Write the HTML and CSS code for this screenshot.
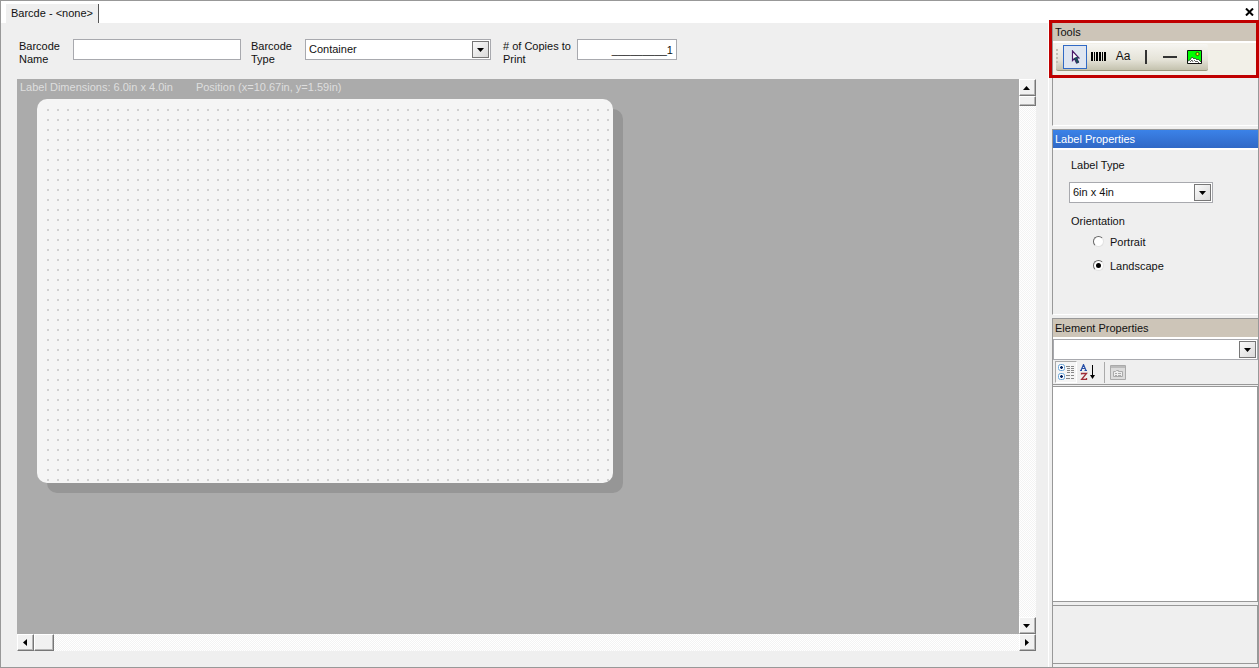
FILE: index.html
```html
<!DOCTYPE html>
<html lang="en">
<head>
<meta charset="utf-8">
<title>Barcode designer</title>
<link rel="stylesheet" href="styles.css">
</head>
<body>
<div class="window">
  <header class="tabs">
    <button class="tab" type="button">Barcde - &lt;none&gt;</button>
    <button class="close" type="button" aria-label="Close"><svg width="9" height="8" viewBox="0 0 9 8"><path d="M1 .5 8 7.5M8 .5 1 7.5" stroke="#000" stroke-width="2"/></svg></button>
  </header>
  <div class="workspace">
    <main class="main">
      <form class="fields">
        <label class="caption" for="name">Barcode Name</label>
        <input class="box name" id="name" type="text">
        <label class="caption" for="type">Barcode Type</label>
        <span class="combo type">
          <select class="box" id="type"><option>Container</option></select>
          <span class="drop"><svg width="7" height="4"><path d="M0 0h7L3.500 4z"/></svg></span>
        </span>
        <label class="caption copies-label" for="copies"># of Copies to Print</label>
        <input class="box copies" id="copies" type="text" value="_________1">
      </form>
      <div class="designer">
        <section class="canvas">
          <div class="status"><span>Label Dimensions: 6.0in x 4.0in</span><span>Position (x=10.67in, y=1.59in)</span></div>
          <div class="sheet"></div>
        </section>
        <div class="scroll vertical">
          <button type="button" class="arrow" aria-label="Scroll up"><svg width="7" height="4"><path d="M0 4h7L3.500 0z"/></svg></button>
          <div class="thumb"></div>
          <button type="button" class="arrow last" aria-label="Scroll down"><svg width="7" height="4"><path d="M0 0h7L3.500 4z"/></svg></button>
        </div>
        <div class="scroll horizontal">
          <button type="button" class="arrow" aria-label="Scroll left"><svg width="4" height="7"><path d="M4 0v7L0 3.500z"/></svg></button>
          <div class="thumb"></div>
        </div>
        <button type="button" class="arrow" aria-label="Scroll right"><svg width="4" height="7"><path d="M0 0v7l4-3.500z"/></svg></button>
      </div>
    </main>
    <aside class="side">
      <section class="tools">
        <h2 class="title">Tools</h2>
        <div class="strip">
          <div class="toolbar">
            <svg class="grip" width="2" height="16"><path d="M1 0v16" stroke="#c3c0b4" stroke-width="2" stroke-dasharray="2 2"/></svg>
            <button type="button" class="tool selected" aria-label="Select"><svg width="9" height="14" viewBox="0 0 9 14"><path d="M1.500 1v9.500l2-2 2 4.500 2-1-2-4H8z" fill="#fff" stroke="#4a1768" stroke-width="1.200"/><path d="M2.500 9 5 7l3 .5-2 1 2 4-2 1-2-4z" fill="#174c55"/></svg></button>
            <button type="button" class="tool" aria-label="Barcode"><svg width="15" height="9"><path d="M0 0h2v9H0zM3 0h1v9H3zM5 0h2v9H5zM8 0h2v9H8zM11 0h1v9h-1zM13 0h2v9h-2z"/></svg></button>
            <button type="button" class="tool text">Aa</button>
            <button type="button" class="tool" aria-label="Vertical line"><svg width="2" height="14"><path d="M0 0h2v14H0z" fill="#333"/></svg></button>
            <button type="button" class="tool" aria-label="Horizontal line"><svg width="14" height="2"><path d="M0 0h14v2H0z" fill="#333"/></svg></button>
            <button type="button" class="tool" aria-label="Picture"><svg width="15" height="14" viewBox="0 0 15 14"><path d="M.5.500h14v13H.5z" fill="#0f0" stroke="#111"/><circle cx="10.500" cy="4" r="1.600" fill="#ff0" stroke="#222" stroke-width=".8"/><path d="M1 13v-2l2-1 2-3 2 2 1-1 2 2 1-1 3 3v1z" fill="#fff"/><path d="m1 11 2-1 2-3 2 2 1-1 2 2 1-1 3 3M3 12l2-2 1 2m1-2 2 2 1-1 2 2" fill="none" stroke="#222" stroke-width=".7"/></svg></button>
          </div>
        </div>
      </section>
      <section class="label-panel">
        <h2 class="title active">Label Properties</h2>
        <div class="properties">
          <label for="size">Label Type</label>
          <span class="combo size">
            <select class="box" id="size"><option>6in x 4in</option></select>
            <span class="drop"><svg width="7" height="4"><path d="M0 0h7L3.500 4z"/></svg></span>
          </span>
          <fieldset class="orientation">
            <legend>Orientation</legend>
            <label class="choice"><input type="radio" name="orientation">Portrait</label>
            <label class="choice"><input type="radio" name="orientation" checked>Landscape</label>
          </fieldset>
        </div>
      </section>
      <section class="element-panel">
        <h2 class="title">Element Properties</h2>
        <span class="combo element">
          <select class="box" aria-label="Element"><option></option></select>
          <span class="drop"><svg width="7" height="4"><path d="M0 0h7L3.500 4z"/></svg></span>
        </span>
        <div class="sorts">
          <button type="button" class="sort pressed" aria-label="Categorized"><svg width="17" height="17"><g fill="#fff" stroke="#6aa5d8"><rect x=".5" y=".5" width="6" height="6" rx="2"/><rect x=".5" y="9.500" width="6" height="6" rx="2"/></g><path d="M2 3.500h3M3.500 2v3M2 12.500h3M3.500 11v3" stroke="#002060" stroke-width="1.300"/><path d="M8 2.500h4M13 2.500h3M9 4.500h3M13 4.500h3M9 6.500h3M13 6.500h3M9 8.500h3M13 8.500h3M8 11.500h4M13 11.500h3M8 14.500h4M13 14.500h3" stroke="#888"/></svg></button>
          <button type="button" class="sort" aria-label="Alphabetical"><svg width="16" height="16" fill="none"><path d="m1 6.500 2.500-6 2.500 6M2 4.500h3M0 6.500h2M4.500 6.500H7" stroke="#2750a8" stroke-width="1.200"/><path d="M1.500 10.500v-1h5l-5 6h5v-1.500" stroke="#a02c38" stroke-width="1.300"/><path d="M12.500 1v11" stroke="#000"/><path d="M10 11h5l-2.500 4z" fill="#000"/></svg></button>
          <span class="divider"></span>
          <button type="button" class="sort" disabled aria-label="Property pages"><svg width="16" height="15"><path d="M.5.500h15v14H.5z" fill="#dcdcdc" stroke="#aaa"/><path d="M1 2h14" stroke="#bbb" stroke-width="2"/><path d="M3.500 6.500h2l1-1h2v1h4v5h-9z" fill="#eee" stroke="#aaa"/><path d="M5 8.500h2M8 8.500h3M5 10.500h2M8 10.500h3" stroke="#aaa"/></svg></button>
        </div>
        <div class="list"></div>
        <div class="help"></div>
      </section>
    </aside>
  </div>
</div>
</body>
</html>
```
FILE: styles.css
```css
*, *::before, *::after { box-sizing: border-box; }
body { margin: 0; font: 11px/13px "Liberation Sans", Arial, sans-serif; color: #111; }
svg { display: block; }
button, input, select { font: inherit; color: inherit; margin: 0; padding: 0; border: 0; border-radius: 0; }
.window { display: flex; flex-direction: column; height: 100vh; border: 1px solid #989898; background: #efefef; }
.tabs { display: flex; justify-content: space-between; align-items: flex-end; height: 22px; padding: 0 4px 0 5px; background: #fff; }
.tab { height: 19px; padding: 0 5px; background: #efefef; border-right: 1px solid #555; }
.close { align-self: center; background: none; }
.workspace { display: flex; flex: 1; min-height: 0; }
.main { display: flex; flex-direction: column; flex: 1; min-width: 0; padding: 16px 12px 16px 16px; border-right: 1px solid #fff; }
.fields { display: flex; align-items: flex-start; height: 40px; padding-left: 2px; }
.caption { width: 54px; padding-top: 1px; }
.copies-label { width: 74px; }
.box { display: block; height: 21px; background: #fff; border: 1px solid #a8a9ae; padding: 0 3px; appearance: none; outline: 0; }
.name { width: 168px; margin-right: 10px; }
.copies { width: 100px; text-align: right; }
.combo { display: block; position: relative; }
.combo .box { width: 100%; }
.type { width: 186px; margin-right: 12px; }
.drop { position: absolute; top: 2px; right: 2px; width: 17px; height: 17px; display: grid; place-items: center; pointer-events: none; border: 1px solid #777; background: linear-gradient(135deg, #fafafa, #dadada); }
.designer { flex: 1; min-height: 0; display: grid; grid-template: 1fr 17px / 1fr 17px; }
.canvas { background: #ababab; overflow: hidden; }
.status { display: flex; gap: 23px; height: 20px; padding: 2px 3px; color: #dedede; white-space: nowrap; }
.sheet { width: 576px; height: 384px; margin-left: 20px; padding: 10px 0 0 10px; border-radius: 10px; background: conic-gradient(from 270deg at 2px 2px, #d0d0d0 90deg, transparent 0) 0 0 / 10px 10px content-box, #f5f5f5; box-shadow: 10px 10px 0 #969696; }
.scroll { display: flex; background: repeating-conic-gradient(#fff 0 25%, #f3f3f3 0 50%) 0 0 / 2px 2px; }
.vertical { flex-direction: column; }
.arrow, .thumb { background: #f1f1f1; border: 1px solid #fff; border-right-color: #777; border-bottom-color: #777; box-shadow: inset -1px -1px #b5b5b5; }
.arrow { display: grid; place-items: center; width: 17px; height: 17px; padding: 0 2px 0 0; flex: none; }
.last { margin-top: auto; }
.vertical .thumb { height: 10px; }
.horizontal .thumb { width: 20px; }
.side { display: flex; flex-direction: column; width: 209px; padding-left: 3px; }
.side > section { border-left: 1px solid #989898; }
.title { height: 20px; margin: 0; padding: 3px 2px; font: inherit; background: #cdc5b8; border-bottom: 2px solid #fff; }
.active { color: #fff; background: linear-gradient(#3b82e8, #3068c6); }
.tools { position: relative; height: 103px; border-bottom: 1px solid #fff; }
.tools::after { content: ""; position: absolute; top: -3px; left: -4px; right: -1px; height: 58px; border: 3px solid #c00000; pointer-events: none; }
.strip { height: 32px; padding: 1px 0 0 3px; background: #f2f0e8; }
.toolbar { display: flex; align-items: center; width: 152px; height: 27px; padding-bottom: 1px; border-bottom: 1px solid #9a987e; border-radius: 2px; background: linear-gradient(#f6f5f1, #e5e3d8 60%, #c4c2ae); }
.grip { margin-right: 5px; }
.tool { display: grid; place-items: center; width: 24px; height: 24px; padding: 0 2px 0 0; background: none; }
.text { padding: 0; font-size: 12px; }
.selected { padding: 0; border: 1px solid #316ac5; background: #dfe6f1; }
.label-panel { margin-top: 3px; height: 186px; border-top: 1px solid #989898; border-bottom: 1px solid #fff; }
.properties { padding: 9px 46px 0 18px; }
.size { width: 144px; margin: 10px 0 12px -2px; }
.orientation { margin: 0; padding: 0; border: 0; }
.orientation legend { padding: 0; }
.choice { display: flex; align-items: center; gap: 6px; height: 24px; padding-left: 22px; }
.choice:first-of-type { margin-top: 2px; }
.choice input { appearance: none; display: grid; place-items: center; width: 11px; height: 11px; margin-bottom: 2px; background: #fff; border: 1px solid #666; border-right-color: #e2e2e2; border-bottom-color: #e2e2e2; border-radius: 50%; }
.choice input:checked::after { content: ""; width: 5px; height: 5px; border-radius: 50%; background: #000; }
.element-panel { display: flex; flex-direction: column; flex: 1; min-height: 0; margin-top: 3px; padding-bottom: 3px; border-top: 1px solid #989898; }
.sorts { display: flex; align-items: center; height: 25px; padding-left: 2px; border-bottom: 1px solid #989898; }
.sort { display: grid; place-items: center; width: 22px; height: 22px; background: none; }
.pressed { border: 1px solid #aaa; border-right-color: #fff; border-bottom-color: #fff; background: #f5f5f5; }
.divider { height: 21px; margin: 0 2px 0 5px; border-left: 1px solid #aaa; }
.list { flex: 1; margin-top: 1px; background: #fff; border: 1px solid #989898; border-left: 0; }
.help { height: 59px; margin-top: 3px; border: 1px solid #989898; border-left: 0; }
```
